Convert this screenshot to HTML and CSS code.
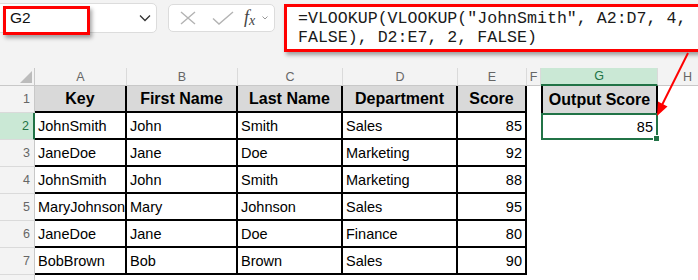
FILE: index.html
```html
<!DOCTYPE html>
<html lang="en">
<head>
    <meta charset="UTF-8">
    <title>VLOOKUP - Output Score</title>
    <link rel="stylesheet" href="styles.css">
</head>
<body>
    <div class="app">
        <div class="toolbar">
            <div class="namebox">
                <span class="ref">G2</span>
                <svg class="chevron" width="12" height="8" viewBox="0 0 12 8"><polyline points="1,1.5 6,6.5 11,1.5" fill="none" stroke="#333" stroke-width="1.3"/></svg>
                <div class="mark"></div>
            </div>
            <div class="fxbox">
                <svg class="cancel" width="16" height="14" viewBox="0 0 16 14"><path d="M1 1 L15 13 M15 1 L1 13" stroke="#b3b3b3" stroke-width="1.4" fill="none"/></svg>
                <svg class="enter" width="22" height="14" viewBox="0 0 22 14"><polyline points="1,7.5 7,13 21,1" stroke="#b3b3b3" stroke-width="1.4" fill="none"/></svg>
                <span class="fx">f<sub>x</sub></span>
                <svg class="mini" width="6" height="4" viewBox="0 0 6 4"><polyline points="0.5,0.5 3,3 5.5,0.5" fill="none" stroke="#999" stroke-width="1"/></svg>
            </div>
            <div class="formula">=VLOOKUP(VLOOKUP("JohnSmith", A2:D7, 4,<br>FALSE), D2:E7, 2, FALSE)</div>
        </div>

        <div class="sheet">
            <div class="corner"></div>
            <div class="colhead">A</div>
            <div class="colhead">B</div>
            <div class="colhead">C</div>
            <div class="colhead">D</div>
            <div class="colhead">E</div>
            <div class="colhead">F</div>
            <div class="colhead sel">G</div>
            <div class="colhead">H</div>

            <div class="rowhead">1</div>
            <div class="th">Key</div>
            <div class="th">First Name</div>
            <div class="th">Last Name</div>
            <div class="th">Department</div>
            <div class="th">Score</div>
            <div class="cell"></div>
            <div class="th out">Output Score</div>
            <div class="cell"></div>

            <div class="rowhead sel">2</div>
            <div class="td">JohnSmith</div>
            <div class="td">John</div>
            <div class="td">Smith</div>
            <div class="td">Sales</div>
            <div class="td num">85</div>
            <div class="cell"></div>
            <div class="active num">85<span class="handle"></span></div>
            <div class="cell"></div>

            <div class="rowhead">3</div>
            <div class="td">JaneDoe</div>
            <div class="td">Jane</div>
            <div class="td">Doe</div>
            <div class="td">Marketing</div>
            <div class="td num">92</div>
            <div class="cell"></div>
            <div class="cell"></div>
            <div class="cell"></div>

            <div class="rowhead">4</div>
            <div class="td">JohnSmith</div>
            <div class="td">John</div>
            <div class="td">Smith</div>
            <div class="td">Marketing</div>
            <div class="td num">88</div>
            <div class="cell"></div>
            <div class="cell"></div>
            <div class="cell"></div>

            <div class="rowhead">5</div>
            <div class="td">MaryJohnson</div>
            <div class="td">Mary</div>
            <div class="td">Johnson</div>
            <div class="td">Sales</div>
            <div class="td num">95</div>
            <div class="cell"></div>
            <div class="cell"></div>
            <div class="cell"></div>

            <div class="rowhead">6</div>
            <div class="td">JaneDoe</div>
            <div class="td">Jane</div>
            <div class="td">Doe</div>
            <div class="td">Finance</div>
            <div class="td num">80</div>
            <div class="cell"></div>
            <div class="cell"></div>
            <div class="cell"></div>

            <div class="rowhead">7</div>
            <div class="td">BobBrown</div>
            <div class="td">Bob</div>
            <div class="td">Brown</div>
            <div class="td">Sales</div>
            <div class="td num">90</div>
            <div class="cell"></div>
            <div class="cell"></div>
            <div class="cell"></div>

            <div class="rowhead"></div>
        </div>

        <!-- annotation arrow from the formula to G2 -->
        <svg class="arrow" width="698" height="280" viewBox="0 0 698 280">
            <line x1="688" y1="53" x2="662" y2="105" stroke="#f00" stroke-width="2"/>
            <polygon points="657,116 667.5,106.5 658,101.5" fill="#f00"/>
        </svg>
    </div>
</body>
</html>
```

FILE: styles.css
```css
body {
    margin: 0;
    background: #fff;
    font-family: "Liberation Sans", Arial, sans-serif;
    overflow: hidden;
}

.app {
    position: relative;
    width: 698px;
    height: 280px;
    overflow: hidden;
}

/* ---- top bar ---- */

.toolbar {
    display: flex;
    align-items: flex-start;
    height: 68px;
    box-sizing: border-box;
    padding-top: 3px;
    background: #f3f3f3;
}

.toolbar > div {
    flex: none;
}

.namebox {
    position: relative;
    display: flex;
    align-items: center;
    justify-content: space-between;
    width: 161px;
    height: 30px;
    margin-left: -4px;
    box-sizing: border-box;
    padding: 0 5px 0 13px;
    background: #fff;
    border: 1px solid #dcdcdc;
    border-radius: 5px;
}

.ref {
    font-size: 15.5px;
    color: #111;
}

.mark {
    position: absolute;
    left: 6px;
    top: 2px;
    width: 87px;
    height: 29px;
    box-sizing: border-box;
    border: 3px solid #f00;
    box-shadow: 2px 3px 4px rgba(0, 0, 0, 0.35);
}

.fxbox {
    display: flex;
    align-items: center;
    width: 107px;
    height: 28px;
    margin: 1px 0 0 11px;
    box-sizing: border-box;
    padding-left: 11px;
    background: #fff;
    border: 1px solid #dcdcdc;
    border-radius: 5px;
}

.cancel {
    margin-right: 16px;
}

.enter {
    margin-right: 10px;
}

.mini {
    margin-left: 7px;
}

.fx {
    font-family: "Liberation Serif", serif;
    font-style: italic;
    font-size: 18px;
    color: #444;
    line-height: 1;
}

.fx sub {
    font-size: 14px;
    vertical-align: -2px;
}

.formula {
    width: 440px;
    height: 48px;
    margin: 1px 0 0 9px;
    box-sizing: border-box;
    padding: 2px 0 0 11px;
    background: #fff;
    border: 3px solid #f00;
    box-shadow: 2px 3px 4px rgba(0, 0, 0, 0.35);
    font-family: "Liberation Mono", monospace;
    font-size: 16.6px;
    line-height: 19px;
    color: #1a1a1a;
    white-space: nowrap;
}

/* ---- grid ---- */

.sheet {
    display: grid;
    grid-template-columns: 35px 92px 111px 105px 115px 69px 14px 117px 60px;
    grid-template-rows: 18px repeat(7, 27px) 10px;
    font-size: 14.5px;
    color: #000;
}

.sheet > div {
    box-sizing: border-box;
    display: flex;
    align-items: center;
    white-space: nowrap;
    overflow: visible;
}

.corner {
    position: relative;
    background: #f3f3f3;
    border-right: 1px solid #c8c8c8;
    border-bottom: 1px solid #c8c8c8;
}

.corner::after {
    content: "";
    position: absolute;
    right: 2px;
    bottom: 2px;
    width: 12px;
    height: 12px;
    background: #bcbcbc;
    clip-path: polygon(100% 0, 100% 100%, 0 100%);
}

.colhead {
    justify-content: center;
    background: #f3f3f3;
    color: #666;
    font-size: 12.5px;
    border-right: 1px solid #dadada;
    border-bottom: 1px solid #c8c8c8;
}

.colhead.sel {
    background: #cae8d5;
    color: #217346;
    border-bottom: 2px solid #217346;
}

.rowhead {
    justify-content: flex-end;
    padding-right: 4px;
    background: #f3f3f3;
    color: #666;
    font-size: 12.5px;
    border-right: 1px solid #c8c8c8;
    border-bottom: 1px solid #dadada;
}

.rowhead.sel {
    background: #cae8d5;
    color: #217346;
    border-right: 2px solid #217346;
}

.th {
    justify-content: center;
    background: #d9d9d9;
    font-weight: bold;
    font-size: 16px;
    border-right: 2px solid #000;
    border-bottom: 2px solid #000;
}

.th.out {
    border-left: 2px solid #000;
    border-bottom: none;
}

.td {
    padding-left: 3px;
    border-right: 2px solid #000;
    border-bottom: 2px solid #000;
}

.num {
    justify-content: flex-end;
    padding: 0 3px 0 0;
}

.active {
    position: relative;
    border: 2px solid #217346;
}

.handle {
    position: absolute;
    right: -4px;
    bottom: -4px;
    width: 5px;
    height: 5px;
    background: #217346;
    border: 1px solid #fff;
}

.arrow {
    position: absolute;
    left: 0;
    top: 0;
    pointer-events: none;
}
```
